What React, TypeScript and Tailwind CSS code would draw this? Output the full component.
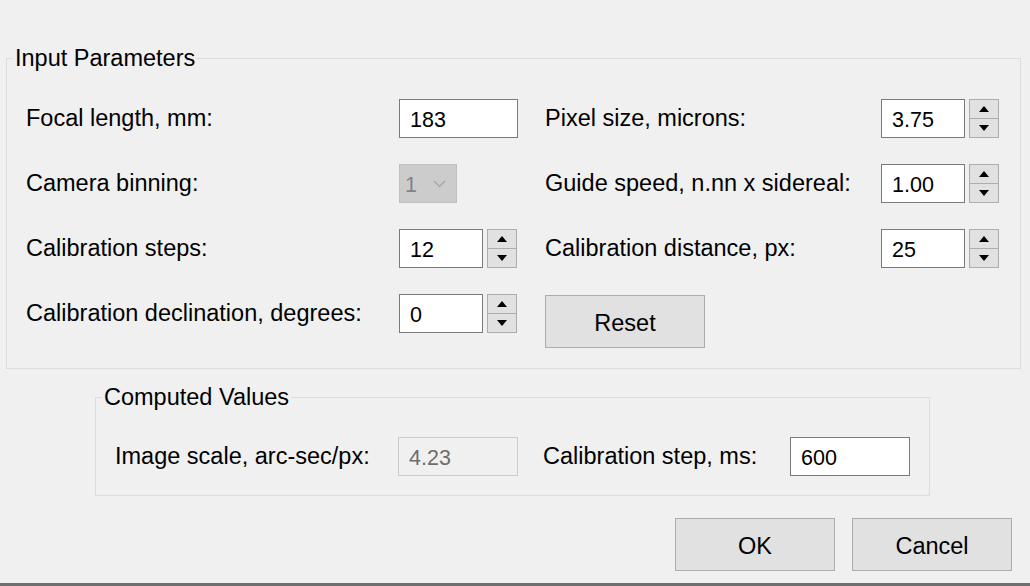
import React from "react";

// Guide calibration dialog, drawn as a Windows-style form.
const FONT = "font-['Liberation_Sans',Arial,sans-serif]";

function Label({ text, width }: { text: string; width: string }) {
  return (
    <div className={`${width} flex h-[39px] items-center pt-[1px] text-[23.5px] leading-none text-black`}>
      {text}
    </div>
  );
}

function TextBox({ value, width, disabled }: { value: string; width: string; disabled?: boolean }) {
  return (
    <input
      readOnly
      defaultValue={value}
      className={`${width} h-[39px] border pl-[10px] pt-[3px] text-[21.5px] outline-none ${
        disabled
          ? "border-[#cccccc] bg-[#f0f0f0] text-[#6d6d6d]"
          : "border-[#7a7a7a] bg-white text-black"
      }`}
    />
  );
}

function Arrow({ up }: { up?: boolean }) {
  return (
    <svg width="10" height="6" viewBox="0 0 10 6">
      <polygon points={up ? "5,0 10,6 0,6" : "0,0 10,0 5,6"} fill="#000" />
    </svg>
  );
}

function SpinBox({ value }: { value: string }) {
  return (
    <div className="flex h-[39px] items-stretch gap-[4px]">
      <TextBox value={value} width="w-[84px]" />
      <div className="flex w-[30px] flex-col">
        <button className="flex h-[20px] items-center justify-center border border-[#adadad] bg-[#e1e1e1]">
          <Arrow up />
        </button>
        <button className="flex h-[19px] items-center justify-center border border-t-0 border-[#adadad] bg-[#e1e1e1]">
          <Arrow />
        </button>
      </div>
    </div>
  );
}

function ComboDisabled() {
  return (
    <div className="flex h-[39px] w-[58px] items-center justify-between border border-[#bfbfbf] bg-[#cccccc] pl-[5px] pr-[10px] pt-[3px] text-[21.5px] text-[#838383]">
      <span>1</span>
      <svg width="13" height="8" viewBox="0 0 13 8" className="-mt-[2px]">
        <polyline points="1,1 6.5,6.5 12,1" fill="none" stroke="#a2a2a2" strokeWidth="1.2" />
      </svg>
    </div>
  );
}

function PushButton({ text }: { text: string }) {
  return (
    <button className="flex h-[53px] w-[160px] items-center justify-center border border-[#adadad] bg-[#e1e1e1] pt-[5px] text-[23.5px] text-black">
      {text}
    </button>
  );
}

export default function App() {
  return (
    <div className={`${FONT} flex h-[586px] w-[1030px] flex-col overflow-hidden bg-[#f0f0f0] pt-[45px]`}>
      <fieldset className="ml-[6px] h-[324px] w-[1015px] border border-[#dcdcdc] pt-[28px]">
        <legend className="ml-[6px] px-[2px] text-[23.5px] leading-[26px] text-black">
          Input Parameters
        </legend>
        <div className="flex flex-col gap-[26px] pl-[19px]">
          <div className="flex items-start">
            <Label text="Focal length, mm:" width="w-[373px]" />
            <div className="w-[146px]">
              <TextBox value="183" width="w-[119px]" />
            </div>
            <Label text="Pixel size, microns:" width="w-[336px]" />
            <SpinBox value="3.75" />
          </div>
          <div className="flex items-start">
            <Label text="Camera binning:" width="w-[373px]" />
            <div className="w-[146px]">
              <ComboDisabled />
            </div>
            <Label text="Guide speed, n.nn x sidereal:" width="w-[336px]" />
            <SpinBox value="1.00" />
          </div>
          <div className="flex items-start">
            <Label text="Calibration steps:" width="w-[373px]" />
            <div className="w-[146px]">
              <SpinBox value="12" />
            </div>
            <Label text="Calibration distance, px:" width="w-[336px]" />
            <SpinBox value="25" />
          </div>
          <div className="flex items-start">
            <Label text="Calibration declination, degrees:" width="w-[373px]" />
            <div className="w-[146px]">
              <SpinBox value="0" />
            </div>
            <div className="mt-[1px]">
              <PushButton text="Reset" />
            </div>
          </div>
        </div>
      </fieldset>

      <fieldset className="ml-[95px] mt-[15px] h-[112px] w-[835px] border border-[#dcdcdc] pt-[27px]">
        <legend className="ml-[6px] px-[2px] text-[23.5px] leading-[26px] text-black">
          Computed Values
        </legend>
        <div className="flex items-start pl-[19px]">
          <Label text="Image scale, arc-sec/px:" width="w-[283px]" />
          <TextBox value="4.23" width="w-[120px]" disabled />
          <div className="w-[25px]" />
          <Label text="Calibration step, ms:" width="w-[247px]" />
          <TextBox value="600" width="w-[120px]" />
        </div>
      </fieldset>

      <div className="mt-[22px] flex justify-end gap-[17px] pr-[18px]">
        <PushButton text="OK" />
        <PushButton text="Cancel" />
      </div>

      <div className="mt-[12px] h-[3px] w-full bg-[#6f6f6f]" />
    </div>
  );
}
